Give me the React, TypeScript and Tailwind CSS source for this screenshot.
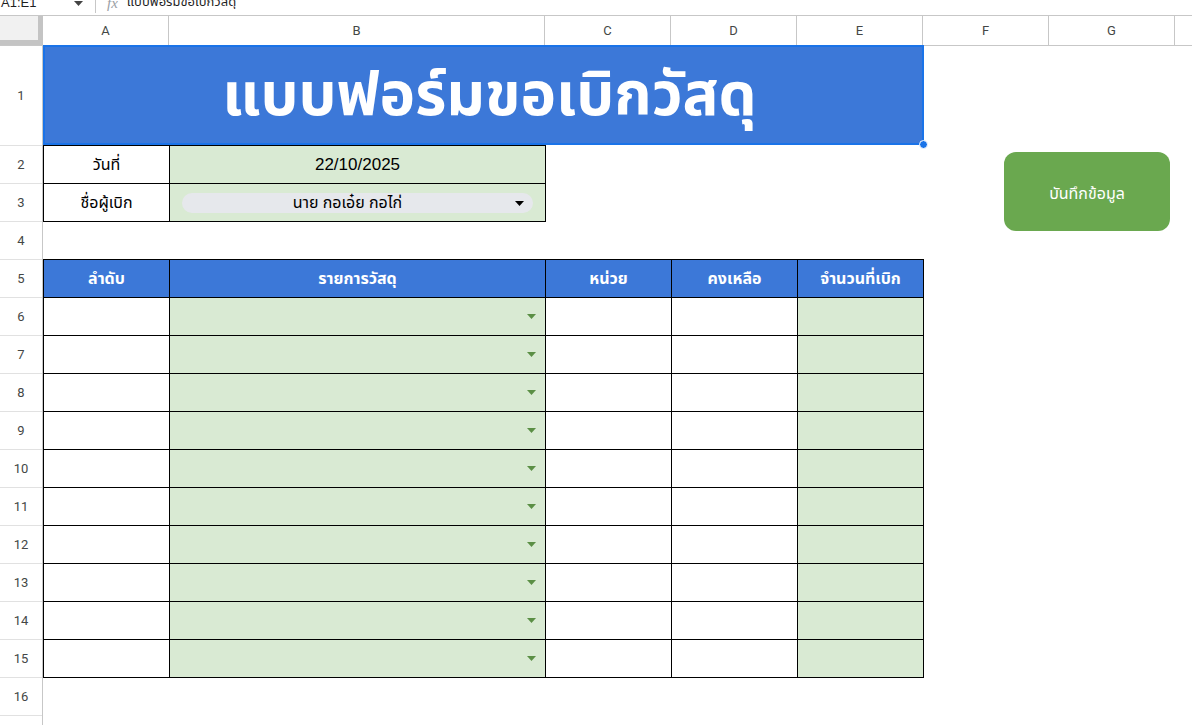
const thai = "font-['Tahoma','Leelawadee_UI','Noto_Sans_Thai','Noto_Sans','Liberation_Sans',sans-serif]";

const colHeaders = [
  { label: "A", w: "w-[126px]" },
  { label: "B", w: "w-[376px]" },
  { label: "C", w: "w-[126px]" },
  { label: "D", w: "w-[126px]" },
  { label: "E", w: "w-[126px]" },
  { label: "F", w: "w-[126px]" },
  { label: "G", w: "w-[126px]" },
  { label: "H", w: "w-[126px]" },
];

const itemRows = [6, 7, 8, 9, 10, 11, 12, 13, 14, 15];

function Caret({ className }: { className: string }) {
  return (
    <svg width="9" height="5" viewBox="0 0 9 5" className={className}>
      <path d="M0 0h9L4.5 5z" fill="currentColor" />
    </svg>
  );
}

function FormulaBar() {
  return (
    <div className="h-[16px] overflow-hidden border-b border-[#c7c7c7] bg-white">
      <div className="-mt-[14px] flex h-[34px] items-center text-[13px] text-[#1f1f1f] font-['Liberation_Sans',sans-serif]">
        <span className="w-[62px] pl-[1px]">A1:E1</span>
        <Caret className="ml-[12px] text-[#444]" />
        <div className="ml-[12px] h-[20px] w-px bg-[#c7c7c7]" />
        <span className="ml-[11px] italic text-[#9aa0a6] font-['Liberation_Serif',serif] text-[15px]">fx</span>
        <span className={`ml-[9px] text-[13px] ${thai}`}>แบบฟอร์มขอเบิกวัสดุ</span>
      </div>
    </div>
  );
}

function ColumnHeader() {
  return (
    <div className="flex h-[30px] border-b border-[#c7c7c7] text-[13px] text-[#444746] font-['Roboto','Liberation_Sans',sans-serif]">
      <div className="h-full w-[43px] shrink-0 border-b-[5px] border-r-[5px] border-[#c4c4c4] bg-[#f1f1f1]" />
      {colHeaders.map((c) => (
        <div key={c.label} className={`${c.w} shrink-0 flex items-center justify-center border-r border-[#c7c7c7]`}>
          {c.label}
        </div>
      ))}
    </div>
  );
}

function RowHeader() {
  const rows = Array.from({ length: 16 }, (_, i) => i + 2);
  return (
    <div className="w-[43px] shrink-0 border-r border-[#c7c7c7] text-[13px] text-[#444746] font-['Roboto','Liberation_Sans',sans-serif]">
      <div className="flex h-[100px] items-center justify-center border-b border-[#e1e1e1]">1</div>
      {rows.map((r) => (
        <div key={r} className="flex h-[38px] items-center justify-center border-b border-[#e1e1e1]">
          {r}
        </div>
      ))}
    </div>
  );
}

export default function App() {
  return (
    <div className="h-[725px] w-[1192px] overflow-hidden bg-white">
      <FormulaBar />
      <ColumnHeader />
      <div className="flex">
        <RowHeader />
        <div className="flex-1">
          {/* row 1: merged title A1:E1 */}
          <div className="relative w-[881px]">
            <div className={`flex h-[99px] items-center justify-center bg-[#3c78d8] pt-[2px] pl-[12px] text-[60px] font-bold text-white ${thai}`}>
              แบบฟอร์มขอเบิกวัสดุ
            </div>
            <div className="pointer-events-none absolute -top-px left-0 right-0 bottom-0 border-2 border-[#1a73e8]" />
            <div className="absolute -bottom-[4px] -right-[4px] h-[9px] w-[9px] rounded-full border border-white bg-[#1a73e8]" />
          </div>

          {/* rows 2-4: requester block + save button */}
          <div className="flex h-[114px] items-start">
            <div className={`grid grid-cols-[125px_375px] grid-rows-[37px_37px] gap-px bg-black p-px text-[16px] text-black ${thai}`}>
              <div className="flex items-center justify-center bg-white">วันที่</div>
              <div className="flex items-center justify-center bg-[#d9ead3] font-['Liberation_Sans',sans-serif] text-[17px]">22/10/2025</div>
              <div className="flex items-center justify-center bg-white">ชื่อผู้เบิก</div>
              <div className="flex items-center bg-[#d9ead3] px-[12px]">
                <div className="relative flex h-[20px] w-full items-center justify-center rounded-full bg-[#e6e8ec] pr-[20px]">
                  <span>นาย กอเอ๋ย กอไก่</span>
                  <Caret className="absolute right-[9px] top-[8px] text-black" />
                </div>
              </div>
            </div>
            <button className={`ml-[458px] mt-[7px] flex h-[79px] w-[166px] items-center justify-center rounded-[12px] bg-[#6aa84f] pt-[4px] text-[16px] text-white ${thai}`}>
              บันทึกข้อมูล
            </button>
          </div>

          {/* rows 5-15: item table */}
          <div className={`grid w-[881px] grid-cols-[125px_375px_125px_125px_125px] auto-rows-[37px] gap-px bg-black p-px text-[16px] ${thai}`}>
            {["ลำดับ", "รายการวัสดุ", "หน่วย", "คงเหลือ", "จำนวนที่เบิก"].map((h) => (
              <div key={h} className="flex items-center justify-center bg-[#3c78d8] font-bold text-white">
                {h}
              </div>
            ))}
            {itemRows.map((r) => (
              <div key={r} className="contents">
                <div className="bg-white" />
                <div className="flex items-center justify-end bg-[#d9ead3] pr-[9px]">
                  <Caret className="text-[#5b8f45]" />
                </div>
                <div className="bg-white" />
                <div className="bg-white" />
                <div className="bg-[#d9ead3]" />
              </div>
            ))}
          </div>
        </div>
      </div>
    </div>
  );
}
